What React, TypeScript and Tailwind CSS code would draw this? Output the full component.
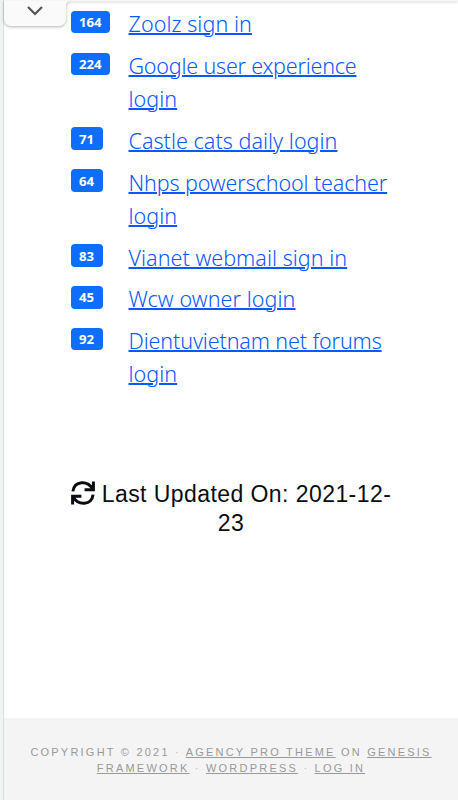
interface LinkLine {
  text: string;
  tracking: string;
}

interface LoginLink {
  count: number;
  lines: LinkLine[];
}

const LINKS: LoginLink[] = [
  { count: 164, lines: [{ text: 'Zoolz sign in', tracking: 'tracking-[0.07px]' }] },
  {
    count: 224,
    lines: [
      { text: 'Google user experience', tracking: 'tracking-[-0.2px]' },
      { text: 'login', tracking: 'tracking-[0.05px]' },
    ],
  },
  { count: 71, lines: [{ text: 'Castle cats daily login', tracking: 'tracking-[0.04px]' }] },
  {
    count: 64,
    lines: [
      { text: 'Nhps powerschool teacher', tracking: 'tracking-[-0.12px]' },
      { text: 'login', tracking: 'tracking-[0.05px]' },
    ],
  },
  { count: 83, lines: [{ text: 'Vianet webmail sign in', tracking: 'tracking-[0.04px]' }] },
  { count: 45, lines: [{ text: 'Wcw owner login', tracking: 'tracking-[0.08px]' }] },
  {
    count: 92,
    lines: [
      { text: 'Dientuvietnam net forums', tracking: 'tracking-[-0.12px]' },
      { text: 'login', tracking: 'tracking-[0.05px]' },
    ],
  },
];

function LinkRow({ count, lines }: LoginLink) {
  return (
    <li className="flex items-start">
      <div className="w-[58px] shrink-0 pt-[3.6px]">
        <span className="flex h-[22.5px] w-fit items-center justify-center rounded-[4px] bg-[#0d6efd] px-[8.5px] pt-[1.5px] text-[13.2px] leading-none font-bold text-white">
          {count}
        </span>
      </div>
      <a href="#" className="font-['Noto_Sans',sans-serif] text-[21.5px] leading-[33px] font-light whitespace-nowrap text-[#0a58ff]">
        {lines.map((line) => (
          <span key={line.text} className={`block underline decoration-2 underline-offset-[1px] ${line.tracking}`}>
            {line.text}
          </span>
        ))}
      </a>
    </li>
  );
}

function SyncIcon() {
  return (
    <svg
      className="mr-[7px] inline-block size-[24px] align-[-3px]"
      viewBox="0 0 24 24"
      fill="none"
      stroke="currentColor"
      strokeWidth="3"
    >
      <path d="M1.9 10.4 C3.5 -0.5 16.5 -1 21.8 8" />
      <path d="M22.4 0.4 V8.8 H13.6" />
      <path d="M22.1 13.6 C20.5 24.5 7.5 25 2.2 16" />
      <path d="M1.6 23.6 V15.2 H10.4" />
    </svg>
  );
}

function Dot() {
  return <span className="text-[#bbb]">·</span>;
}

export default function App() {
  return (
    <div className="relative flex h-[800px] w-[458px] overflow-hidden bg-white font-['Liberation_Sans',sans-serif]">
      {/* Page edge */}
      <div className="w-1 shrink-0 border-r border-[#dcdfdf] bg-[#f1f3f3]" />

      <div className="flex min-w-0 flex-1 flex-col">
        <ul className="flex h-[465px] flex-col gap-[8.85px] pt-[7.2px] pl-[66.5px] font-['Open_Sans',sans-serif]">
          {LINKS.map((link) => (
            <LinkRow key={link.count} {...link} />
          ))}
        </ul>

        <div className="h-[253px] pt-[14.6px] text-center text-[23px] leading-[29px] tracking-[0.43px] text-[#0a0d12]">
          <p>
            <SyncIcon />
            Last Updated On: 2021-12-
          </p>
          <p>23</p>
        </div>

        <footer className="flex-1 bg-[#f4f4f4] pt-[26px] text-center text-[11px] leading-[16px] tracking-[2.22px] whitespace-nowrap text-[#999] uppercase">
          <p>
            Copyright © 2021 <Dot /> <a href="#" className="underline underline-offset-1">Agency Pro Theme</a> on{' '}
            <a href="#" className="underline underline-offset-1">Genesis</a>
          </p>
          <p>
            <a href="#" className="underline underline-offset-1">Framework</a> <Dot />{' '}
            <a href="#" className="underline underline-offset-1">WordPress</a> <Dot />{' '}
            <a href="#" className="underline underline-offset-1">Log in</a>
          </p>
        </footer>
      </div>

      {/* Sticky header edge with its toggle tab */}
      <div className="absolute top-0 right-0 left-1 drop-shadow-[0_1px_1.5px_rgba(0,0,0,0.3)]">
        <div className="h-px bg-[#f5f5f5]" />
        <div className="flex items-start">
          <button className="flex h-[25px] w-[62px] items-center justify-center rounded-b-[7px] bg-[#fafafa] pb-[5px]">
            <svg width="16" height="10" viewBox="0 0 16 10" fill="none" stroke="#555" strokeWidth="2.2">
              <path d="M1 1 L8 8 L15 1" />
            </svg>
          </button>
          <svg width="5" height="5" viewBox="0 0 5 5" fill="#fafafa">
            <path d="M0 0 H5 Q0 0 0 5 Z" />
          </svg>
        </div>
      </div>
    </div>
  );
}
